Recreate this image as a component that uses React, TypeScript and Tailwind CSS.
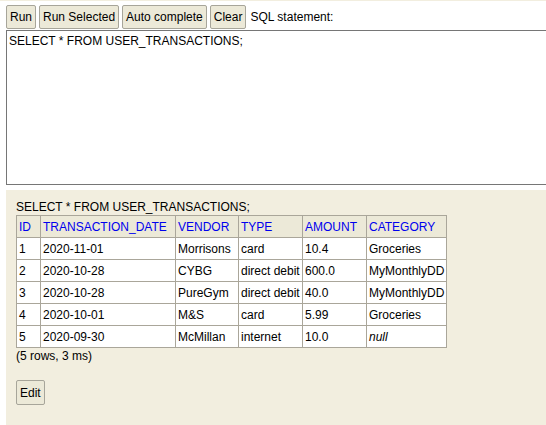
import React from 'react';

const rows = [
  ['1', '2020-11-01', 'Morrisons', 'card', '10.4', 'Groceries'],
  ['2', '2020-10-28', 'CYBG', 'direct debit', '600.0', 'MyMonthlyDD'],
  ['3', '2020-10-28', 'PureGym', 'direct debit', '40.0', 'MyMonthlyDD'],
  ['4', '2020-10-01', 'M&S', 'card', '5.99', 'Groceries'],
  ['5', '2020-09-30', 'McMillan', 'internet', '10.0', null],
];

const headers = ['ID', 'TRANSACTION_DATE', 'VENDOR', 'TYPE', 'AMOUNT', 'CATEGORY'];
const widths = ['w-[24px]', 'w-[135px]', 'w-[63px]', 'w-[64px]', 'w-[64px]', 'w-[80px]'];

const Btn: React.FC<{ label: string }> = ({ label }) => (
  <button className="h-[24px] px-[3px] bg-[#ece9d8] border border-[#a7a59a] rounded-[2px] text-[12px] text-black leading-none">
    {label}
  </button>
);

export default function App() {
  return (
    <div className="w-[546px] h-[425px] overflow-hidden bg-white text-black font-['Liberation_Sans',Arial,sans-serif] text-[12px]">
      <div className="h-[1px] bg-[#f2eedf]" />
      <div className="pl-[6px] pt-[4px]">
        <div className="flex items-center gap-[3px]">
          <Btn label="Run" />
          <Btn label="Run Selected" />
          <Btn label="Auto complete" />
          <Btn label="Clear" />
          <span className="ml-[1px]">SQL statement:</span>
        </div>
        <div className="mt-[1px] w-[560px] h-[155px] border border-[#767676] px-[2px] pt-[3px] leading-[15px]">
          SELECT * FROM USER_TRANSACTIONS;
        </div>
        <div className="mt-[5px] w-[560px] h-[236px] bg-[#f2eedf] px-[10px] pt-[10px]">
          <div className="leading-[15px]">SELECT * FROM USER_TRANSACTIONS;</div>
          <table className="border-collapse">
            <thead>
              <tr>
                {headers.map((h, i) => (
                  <th
                    key={h}
                    className={`${widths[i]} h-[22px] border border-[#aaa69a] bg-[#ece9d8] text-left font-normal text-[#0000ee] px-[2px] py-0`}
                  >
                    {h}
                  </th>
                ))}
              </tr>
            </thead>
            <tbody>
              {rows.map((r) => (
                <tr key={r[0]}>
                  {r.map((c, i) => (
                    <td key={i} className="h-[22px] border border-[#aaa69a] bg-white px-[2px] py-0 whitespace-nowrap">
                      {c === null ? <i>null</i> : c}
                    </td>
                  ))}
                </tr>
              ))}
            </tbody>
          </table>
          <div className="mt-[1px] leading-[15px]">(5 rows, 3 ms)</div>
          <div className="mt-[16px]">
            <button className="h-[25px] px-[3px] bg-[#ece9d8] border border-[#a7a59a] rounded-[2px] text-[12px] leading-none">
              Edit
            </button>
          </div>
        </div>
      </div>
    </div>
  );
}
